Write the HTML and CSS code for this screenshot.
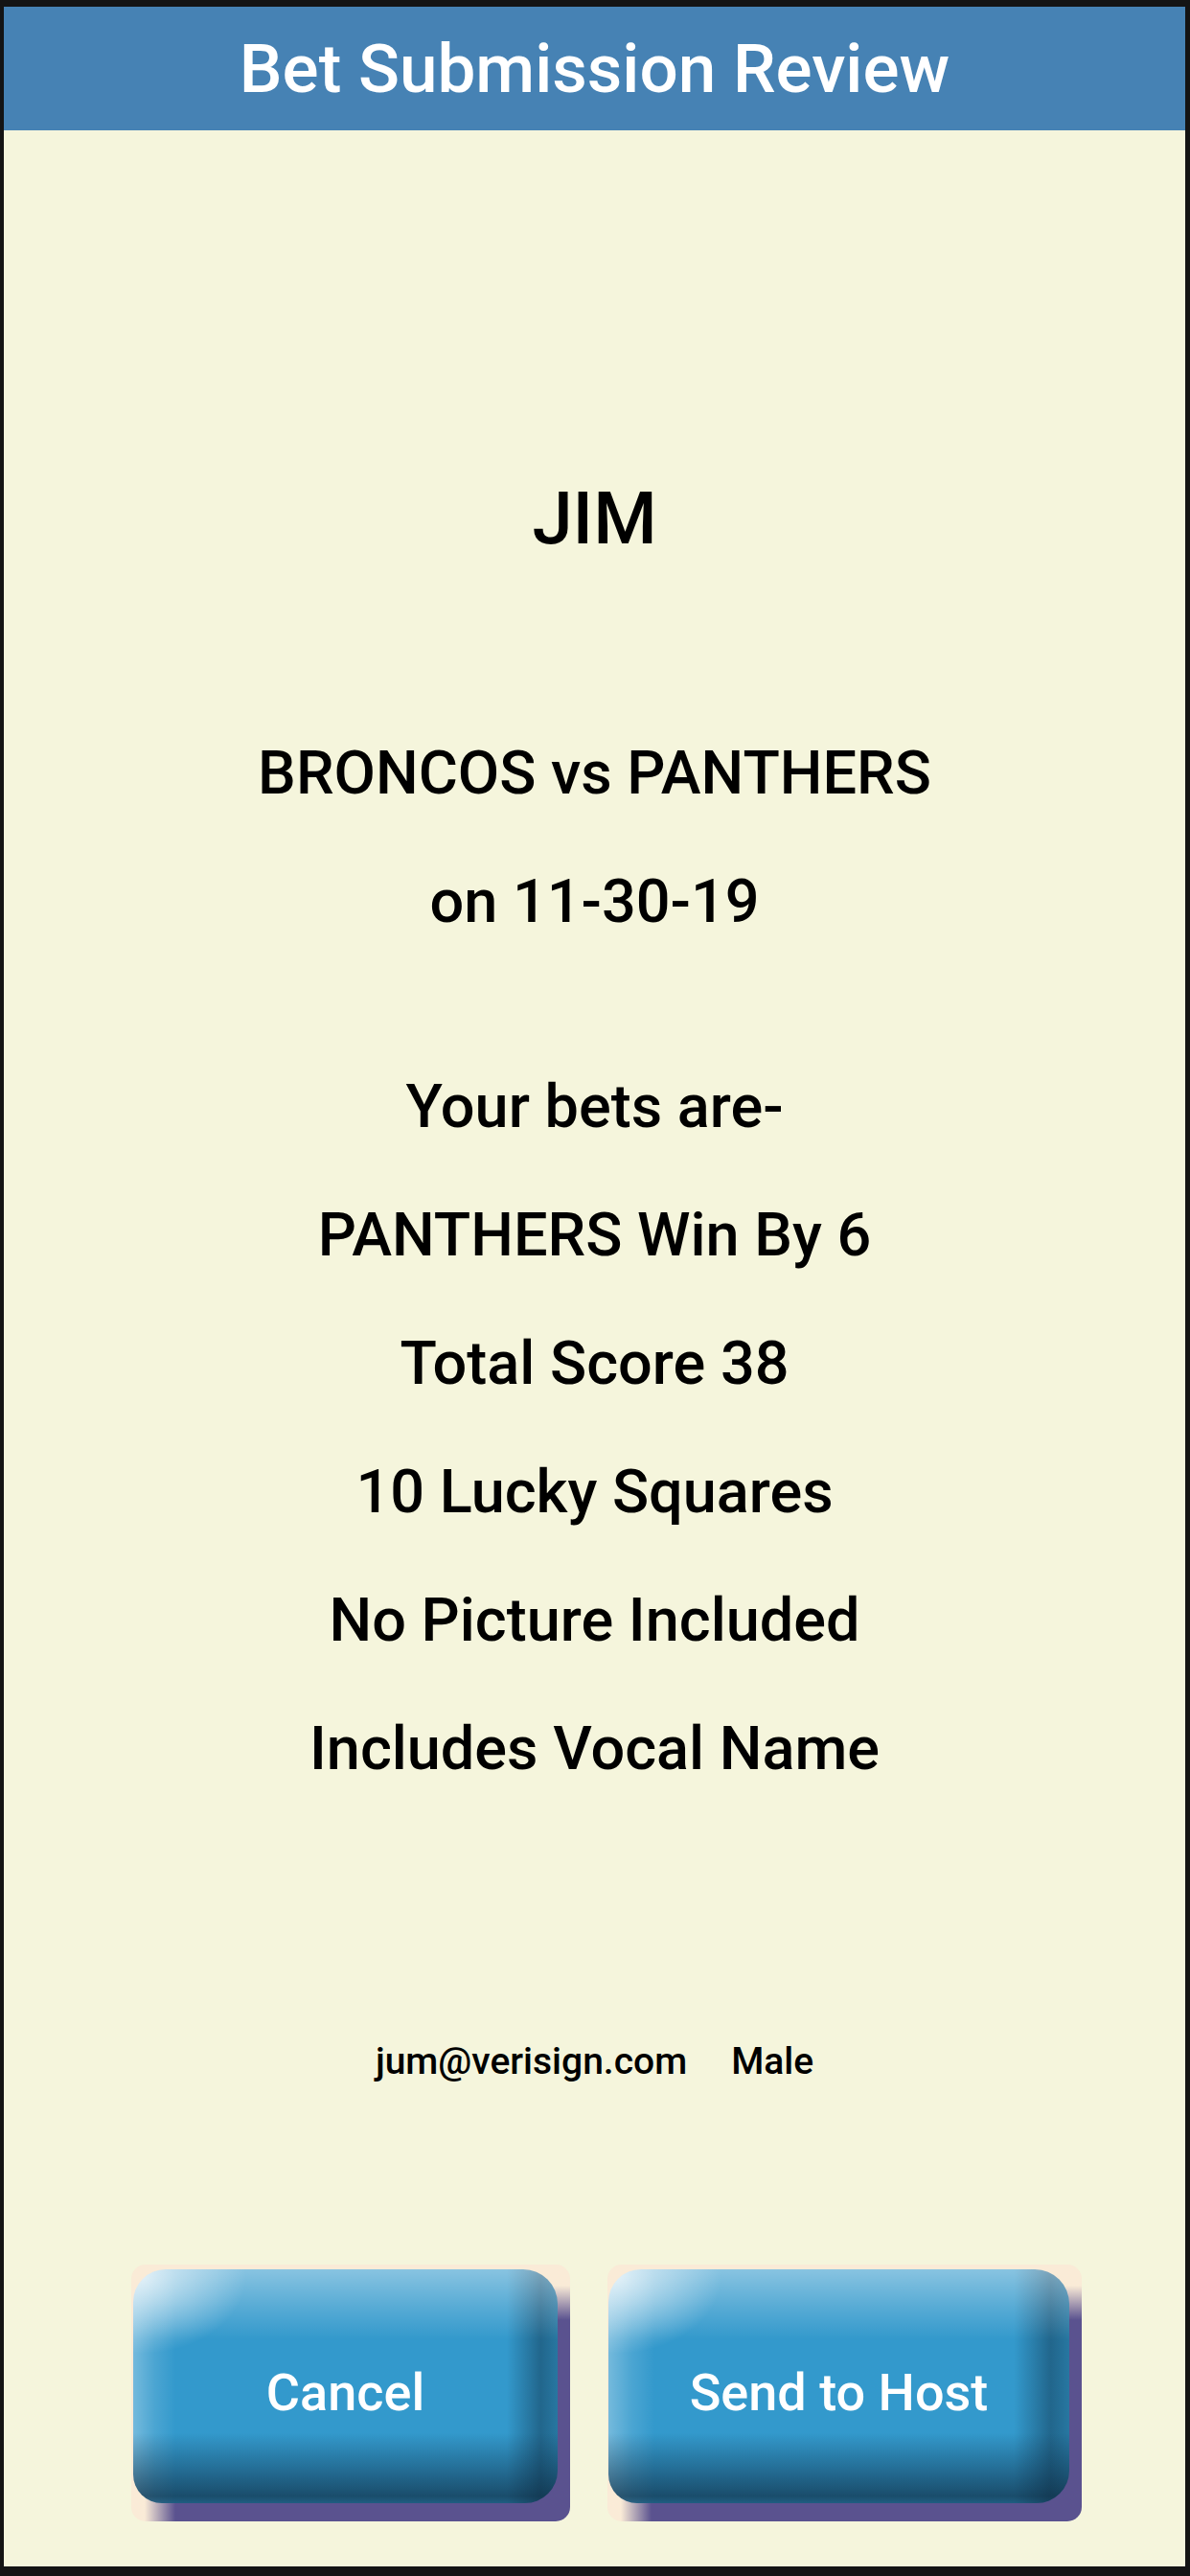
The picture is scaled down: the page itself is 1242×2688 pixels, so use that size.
FILE: index.html
```html
<!DOCTYPE html>
<html lang="en">
<head>
<meta charset="utf-8">
<title>Bet Submission Review</title>
<link rel="stylesheet" href="styles.css">
</head>
<body>
<div class="screen">
  <header class="header">Bet Submission Review</header>
  <main class="content">
    <div class="line name">JIM</div>
    <section class="group game">
      <div class="line">BRONCOS vs PANTHERS</div>
      <div class="line">on 11-30-19</div>
    </section>
    <section class="group bets">
      <div class="line">Your bets are-</div>
      <div class="line">PANTHERS Win By 6</div>
      <div class="line">Total Score 38</div>
      <div class="line">10 Lucky Squares</div>
      <div class="line">No Picture Included</div>
      <div class="line">Includes Vocal Name</div>
    </section>
    <div class="contact">
      <span>jum@verisign.com</span>
      <span>Male</span>
    </div>
    <div class="actions">
      <div class="btn btn-cancel"><div class="face">Cancel</div></div>
      <div class="btn btn-send"><div class="face">Send to Host</div></div>
    </div>
  </main>
</div>
</body>
</html>
```
FILE: styles.css
```css
html, body {
  margin: 0;
  padding: 0;
  background: #141414;
}

.screen {
  width: 1242px;
  height: 2688px;
  box-sizing: border-box;
  border-style: solid;
  border-color: #141414;
  border-width: 7px 5px 10px 4px;
  background: #F5F5DC;
  display: flex;
  flex-direction: column;
  font-family: Roboto, "Liberation Sans", sans-serif;
  overflow: hidden;
}

.header {
  height: 129px;
  flex: 0 0 auto;
  background: #4682B4;
  color: #ffffff;
  font-size: 71px;
  font-weight: 500;
  line-height: 129px;
  text-align: center;
}

.content {
  display: flex;
  flex-direction: column;
  padding-top: 338px;
}

.line {
  font-size: 63px;
  font-weight: 500;
  line-height: 134px;
  text-align: center;
  color: #000000;
}

.name {
  font-size: 76px;
}

.game {
  margin-top: 132px;
}

.bets {
  margin-top: 80px;
}

.contact {
  margin-top: 229px;
  display: flex;
  justify-content: center;
  gap: 46px;
  font-size: 39px;
  font-weight: 500;
  line-height: 60px;
  color: #000000;
}

.actions {
  margin-top: 182px;
  display: flex;
  gap: 39px;
  padding-left: 133px;
}

.btn {
  height: 268px;
  box-sizing: border-box;
  padding: 5px 13px 19px 2px;
  border-radius: 15px;
  overflow: hidden;
  display: flex;
  background:
    linear-gradient(to right, #FAEBD7 14px, #5A528F 46px) 0 100% / 100% 52px no-repeat,
    linear-gradient(to bottom, #FAEBD7 22px, #5A528F 58px) 100% 0 / 48px 100% no-repeat,
    #FAEBD7;
}

.btn-cancel {
  width: 458px;
}

.btn-send {
  width: 495px;
  padding-left: 1px;
}

.face {
  flex: 1 1 auto;
  display: flex;
  align-items: center;
  justify-content: center;
  padding-top: 12px;
  box-sizing: border-box;
  border-radius: 34px 36px 34px 30px;
  color: #ffffff;
  font-size: 54px;
  font-weight: 500;
  background:
    radial-gradient(ellipse 110px 80px at 8px 8px, rgba(255,255,255,0.7), rgba(255,255,255,0) 100%),
    linear-gradient(to bottom,
      rgba(255,255,255,0.42) 0%,
      rgba(255,255,255,0.18) 16%,
      rgba(255,255,255,0) 30%,
      rgba(0,0,0,0) 70%,
      rgba(12,40,62,0.35) 84%,
      rgba(12,36,56,0.65) 97%,
      rgba(12,36,56,0.5) 100%),
    linear-gradient(to right,
      rgba(255,255,255,0.32) 0%,
      rgba(255,255,255,0.12) 5%,
      rgba(255,255,255,0) 10%,
      rgba(0,0,0,0) 88%,
      rgba(12,40,62,0.45) 96%,
      rgba(12,40,62,0.3) 100%),
    #3399CC;
}
```
